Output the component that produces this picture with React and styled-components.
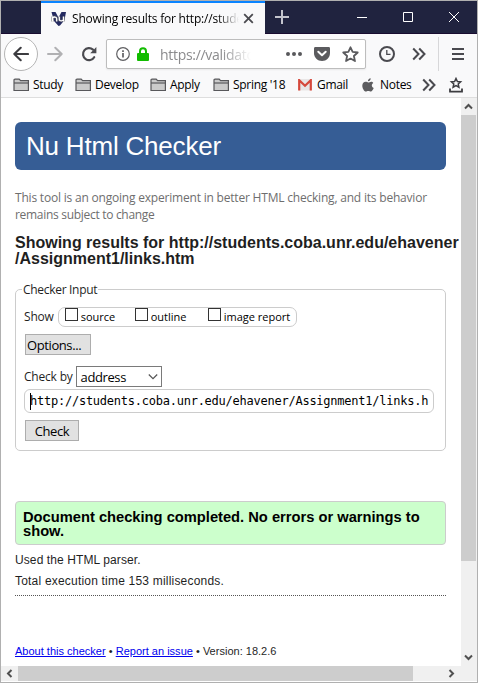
import React from 'react';
import styled, { createGlobalStyle, css } from 'styled-components';

const Global = createGlobalStyle`
  * { box-sizing: border-box; }
  body { margin: 0; overflow: hidden; }
`;

const ui = `'Open Sans', 'Noto Sans', sans-serif`;
const arial = `'Liberation Sans', Arial, sans-serif`;

const Window = styled.div`
  width: 478px;
  height: 683px;
  border: 1px solid #b0b0b0;
  background: #fff;
  display: flex;
  flex-direction: column;
  font-family: ${ui};
  overflow: hidden;
`;

const Label = styled.span`
  white-space: nowrap;
  font-size: ${p => p.$size || 12}px;
  letter-spacing: ${p => p.$track || 0}px;
  color: ${p => p.$color || '#000'};
`;

/* title bar */
const TitleBar = styled.header`
  height: 33px;
  flex: none;
  display: flex;
  background: #20233f;
  border-bottom: 1px solid #190c30;
`;
const Tab = styled.div`
  width: 224px;
  height: 33px;
  margin-left: 40px;
  padding: 0 11px 0 9px;
  border-top: 2px solid #0a84ff;
  background: #f9f9fa;
  display: flex;
  align-items: center;
`;
const TabTitle = styled.div`
  width: 167px;
  margin: 0 4px 0 5px;
  line-height: 20px;
  overflow: hidden;
  display: flex;
  mask-image: linear-gradient(to right, #000 145px, transparent 167px);
`;
const Controls = styled.div`
  flex: 1;
  display: grid;
  grid-template-columns: 34px 40px 46px 46px 45px;
  align-items: center;
  justify-items: center;
`;

/* navigation */
const NavBar = styled.nav`
  height: 40px;
  flex: none;
  background: #f9f9fa;
  display: flex;
  align-items: center;
`;
const BackButton = styled.div`
  width: 34px;
  height: 34px;
  margin-left: 3px;
  border: 1px solid #b5b5b5;
  border-radius: 50%;
  background: #fff;
  display: grid;
  place-items: center;
`;
const NavIcon = styled.div`
  width: ${p => p.$w}px;
  flex: none;
  display: grid;
  place-items: center;
`;
const UrlBar = styled.div`
  width: 260px;
  height: 30px;
  border: 1px solid #bdbdbd;
  border-radius: 2px;
  box-shadow: 0 1px 2px rgba(0, 0, 0, 0.07);
  background: #fff;
  display: flex;
  align-items: center;
  padding-left: 9px;
`;
const Url = styled.div`
  width: 120px;
  margin: 2px 0 0 4px;
  overflow: hidden;
  line-height: 20px;
  display: flex;
  mask-image: linear-gradient(to right, #000 62px, transparent 91px);
`;
const Divider = styled.div`
  width: 1px;
  height: 34px;
  background: #d7d7d9;
`;

const Bookmarks = styled.div`
  height: 24px;
  flex: none;
  background: #f9f9fa;
  border-bottom: 1px solid #dedede;
  display: grid;
  grid-template-columns: 62px 75px 63px 85px 64px 60px 27px 20px;
  padding-left: 12px;
`;
const Bookmark = styled.div`
  height: 22px;
  display: flex;
  align-items: center;
  gap: ${p => p.$gap || 3}px;
  line-height: 20px;
`;

/* viewport */
const Viewport = styled.div`
  flex: 1;
  min-height: 0;
  display: grid;
  grid-template: 568px 15px / 460px 16px;
`;
const Page = styled.main`
  overflow: hidden;
  background: #fff;
  padding: 24px 0 0 14px;
  color: #1f1f1f;
`;
const Banner = styled.h1`
  width: 431px;
  height: 48px;
  margin: 0;
  padding-left: 11px;
  border-radius: 6px;
  background: #365d95;
  font: 400 26px/49px ${arial};
`;
const Intro = styled.p`
  margin: 19px 0 0;
  font-size: 12px;
  line-height: 17px;
`;
const Heading = styled.h2`
  margin: 12px 0 0;
  font: 700 16px/16px ${arial};
  white-space: nowrap;
`;
const Form = styled.form`
  width: 431px;
  height: 170px;
  margin-top: 14px;
  display: flex;
  flex-direction: column;
`;
const Fieldset = styled.fieldset`
  height: 170px;
  margin: 0;
  padding: 0 8px;
  border: 1px solid #ccc;
  border-radius: 5px;
`;
const Legend = styled.legend`
  height: 17px;
  margin-left: -2px;
  padding: 0 1px;
  line-height: 17px;
  display: flex;
`;
const Row = styled.div`
  height: ${p => p.$h}px;
  margin-top: ${p => p.$mt || 0}px;
  display: flex;
  align-items: center;
  line-height: 18px;
`;
const Options = styled.div`
  width: 239px;
  height: 20px;
  margin-left: 4px;
  border: 1px solid #ccc;
  border-radius: 7px;
  display: grid;
  grid-template-columns: 70px 73px 90px;
  padding-left: 6px;
`;
const Option = styled.label`
  display: flex;
  gap: 3px;
`;
const Box = styled.span`
  width: 13px;
  height: 13px;
  flex: none;
  border: 1px solid #333;
  background: #fff;
`;
const Button = styled.button`
  width: ${p => p.$w}px;
  height: 21px;
  margin: 0 0 0 1px;
  padding: 0;
  border: 1px solid #adadad;
  background: #e1e1e1;
  font-family: ${ui};
  line-height: 18px;
  ${p => p.$left && css`text-align: left; padding-left: 1px;`}
`;
const Select = styled.div`
  width: 86px;
  height: 21px;
  margin-left: 3px;
  padding: 0 3px 0 4px;
  border: 1px solid #7a7a7a;
  display: flex;
  align-items: center;
  justify-content: space-between;
`;
const Address = styled.div`
  width: 410px;
  height: 24px;
  margin-top: 2px;
  padding-left: 5px;
  border: 1px solid #ccc;
  border-radius: 6px;
  display: flex;
  align-items: center;
  font-family: 'DejaVu Sans Mono', monospace;
  line-height: 20px;
`;
const Caret = styled.i`
  width: 1px;
  height: 17px;
  background: #000;
  margin-right: -1px;
`;
const Success = styled.div`
  width: 431px;
  height: 44px;
  margin-top: 50px;
  padding: 8px 0 0 7px;
  border: 1px solid #ccc;
  border-radius: 4px;
  background: #cfc;
  color: #000;
  font: 700 14.7px/14px ${arial};
`;
const Stats = styled.div`
  width: 431px;
  height: 51px;
  padding-top: 5px;
  border-bottom: 1px dotted #555;
  font: 12px/21px ${arial};
`;
const Footer = styled.footer`
  margin-top: 46px;
  font: 11px/18px ${arial};
  letter-spacing: 0.01px;
  white-space: nowrap;
`;
const Link = styled.a`
  color: #00e;
  text-decoration: underline;
`;

/* scrollbars */
const VScroll = styled.div`
  background: #f0f0f0;
  display: grid;
  grid-template-rows: 17px 446px 88px 17px;
  padding-right: 1px;
  justify-items: center;
  align-items: center;
`;
const HScroll = styled.div`
  grid-column: 1 / 3;
  background: #f0f0f0;
  display: grid;
  grid-template-columns: 17px 395px 30px 17px;
  align-items: center;
  justify-items: center;
`;
const Thumb = styled.div`
  width: 100%;
  height: 100%;
  background: #cdcdcd;
`;

const Svg = ({ w = 16, h = w, box, s = '#4a4a4f', sw = 2, children }) => (
  <svg width={w} height={h} viewBox={box || `0 0 ${w} ${h}`} fill="none" stroke={s} strokeWidth={sw}>
    {children}
  </svg>
);

const Folder = () => (
  <Svg w={17} h={14} s="#58585b" sw={1.2}>
    <path d="M1 12.5V2.2C1 1.5 1.3 1.1 2 1.1h4.2l1.4 1.6H15.4V12.5Z" fill="#cbcbcb" />
    <path d="M1 5h14.4" />
  </Svg>
);
const Back = () => (
  <Svg s="#3c3c40" sw={2.1}><path d="M1.3 8H15M7.7 1.8 1.3 8l6.4 6.2" strokeLinecap="round" strokeLinejoin="round" /></Svg>
);
const Forward = () => (
  <Svg s="#b1b1b3"><path d="M1 8h13.7M8.3 1.8 14.7 8l-6.4 6.2" strokeLinecap="round" strokeLinejoin="round" /></Svg>
);
const Reload = () => (
  <Svg sw={2.2}>
    <path d="M13.2 11.2A6 6 0 1 1 12 3.6" strokeLinecap="round" />
    <path d="M15.4 1v6.2H9.2Z" fill="#4a4a4f" stroke="none" />
  </Svg>
);
const Chevrons = () => (
  <Svg w={14} h={14}><path d="m1.2 1.5 5.3 5.5-5.3 5.5M7.2 1.5l5.3 5.5-5.3 5.5" /></Svg>
);
const starPath = 'm8 1.2 2 4.4 4.8.5-3.6 3.3 1 4.8L8 11.800 3.800 14.200l1-4.800L1.200 6.100l4.800-.500Z';
const Tiny = ({ d }) => <Svg w={9} h={9} s="#505050"><path d={d} /></Svg>;

const Favicon = () => (
  <svg width="17" height="16" viewBox="0 0 17 16">
    <path d="M1.500 1h4l3 5.500 3-5.500h4.500l-1.500 8-4.500 5.500-1.500.500L4 10Z" fill="#252b61" />
    <path d="M2.500 10.500V5.500M2.500 7c1.500-1.600 4.200-1.200 4.200.8v2.700M9.300 5.500v3c0 1.900 4.200 1.700 4.200-.300M13.500 5.500v5" fill="none" stroke="#666" strokeWidth="3" opacity=".55" />
    <path d="M2.500 10.500V5.500M2.500 7c1.500-1.600 4.200-1.200 4.200.8v2.700M9.300 5.500v3c0 1.900 4.200 1.700 4.200-.300M13.500 5.500v5" fill="none" stroke="#fff" strokeWidth="1.300" />
  </svg>
);
const Gmail = () => (
  <svg width="14" height="12" viewBox="0 0 14 12">
    <path d="M1 0h12v11.5H1Z" fill="#e8e6e6" />
    <path d="M1.200 11.500V1.200L7 6.800l5.800-5.600v10.300" fill="none" stroke="#d5483b" strokeWidth="2.200" />
  </svg>
);
const Apple = () => (
  <svg width="12" height="14" viewBox="0 0 12 14" fill="#5c5c5f">
    <path d="M8.700.3C8.800 2 7.400 3.300 5.900 3.300 5.800 1.800 7.200.5 8.700.3ZM11.300 5C9.200 6.200 9.400 9.100 11.700 10c-.6 1.600-1.700 3.500-2.900 3.500-1 0-1.300-.6-2.500-.6s-1.600.6-2.500.6C2.200 13.500.3 10.300.3 7.700c0-2.600 1.600-3.900 3.300-3.900 1.100 0 2 .7 2.700.7S8 3.700 9.200 3.700c.9 0 1.700.5 2.100 1.300Z" />
  </svg>
);

const folders = ['Study', 'Develop', 'Apply', "Spring '18"];
const ink = '#1f1f1f';

export default function App() {
  return (
    <Window>
      <Global />
      <TitleBar>
        <Tab>
          <Favicon />
          <TabTitle><Label $track={-0.2}>Showing results for http://students</Label></TabTitle>
          <Svg w={11} sw={1.8}><path d="m1.2 1.2 8.6 8.6m0-8.6L1.2 9.8" /></Svg>
        </Tab>
        <Controls>
          <Svg w={14} s="#c3c4cd"><path d="M7 0v14M0 7h14" /></Svg>
          <span />
          <Svg w={10} s="#fff" sw={1}><path d="M0 5.5h10" /></Svg>
          <Svg w={10} s="#fff" sw={1}><path d="M.5.5h9v9h-9Z" /></Svg>
          <Svg w={10} s="#fff" sw={1}><path d="m0 0 10 10M10 0 0 10" /></Svg>
        </Controls>
      </TitleBar>
      <NavBar>
        <BackButton><Back /></BackButton>
        <NavIcon $w={33}><Forward /></NavIcon>
        <NavIcon $w={35}><Reload /></NavIcon>
        <UrlBar>
          <Svg w={14} s="#5f5f62" sw={1.2}>
            <circle cx="7" cy="7" r="6.3" />
            <path d="M7 6v4.500M7 3.200v1.700" strokeWidth="1.7" />
          </Svg>
          <NavIcon $w={26}>
            <Svg w={12} h={14} s="#12bc00">
              <path d="M3 7V4.200a3 3 0 0 1 6 0V7" />
              <rect x="0" y="6" width="12" height="8" rx="1" fill="#12bc00" stroke="none" />
            </Svg>
          </NavIcon>
          <Url><Label $size={14} $track={-0.3} $color="#8b8b8d">https://validator</Label></Url>
          <NavIcon $w={28}>
            <Svg w={16} h={4}><path d="M0 2a2 2 0 1 0 4 0 2 2 0 1 0-4 0M6 2a2 2 0 1 0 4 0 2 2 0 1 0-4 0M12 2a2 2 0 1 0 4 0 2 2 0 1 0-4 0" fill="#58585b" stroke="none" /></Svg>
          </NavIcon>
          <NavIcon $w={28}>
            <Svg w={16} h={14}>
              <path d="M1.500 0h13C15.500 0 16 .5 16 1.500V6c0 4.500-3.600 8-8 8S0 10.500 0 6V1.500C0 .5.5 0 1.500 0Z" fill="#5b5b5e" stroke="none" />
              <path d="m4.300 4.700 3.700 3.500 3.700-3.500" stroke="#fff" strokeLinecap="round" strokeLinejoin="round" />
            </Svg>
          </NavIcon>
          <NavIcon $w={28}><Svg w={17} box="0 0 16 16" s="#5b5b5e" sw={1.7}><path d={starPath} strokeLinejoin="round" /></Svg></NavIcon>
        </UrlBar>
        <NavIcon $w={41}>
          <Svg w={16}><circle cx="8" cy="8" r="7" /><path d="M7.800 4v4.300h3.700" strokeWidth="1.3" /></Svg>
        </NavIcon>
        <NavIcon $w={24}><Chevrons /></NavIcon>
        <NavIcon $w={7} />
        <Divider />
        <NavIcon $w={38}><Svg w={12} h={12}><path d="M0 1h12M0 6h12M0 11h12" /></Svg></NavIcon>
      </NavBar>
      <Bookmarks>
        {folders.map(name => (
          <Bookmark key={name}><Folder /><Label $track={-0.3}>{name}</Label></Bookmark>
        ))}
        <Bookmark $gap={5}><Gmail /><Label $track={-0.3}>Gmail</Label></Bookmark>
        <Bookmark $gap={6}><Apple /><Label $track={-0.3}>Notes</Label></Bookmark>
        <Bookmark><Chevrons /></Bookmark>
        <Bookmark>
          <Svg w={14} h={16} s="#3c3c40" sw={1.5}>
            <path d="m7 1.500 1.400 3 3.200.3-2.400 2.200.7 3.200L7 8.600l-2.900 1.600.7-3.200-2.400-2.200 3.200-.3Z" />
            <path d="M1 11.500V14.700H13V11.500" strokeWidth="1.8" />
          </Svg>
        </Bookmark>
      </Bookmarks>
      <Viewport>
        <Page>
          <Banner><Label $size={26} $track={-0.2} $color="#fff">Nu Html Checker</Label></Banner>
          <Intro>
            <Label $track={-0.2} $color="#6e6e6e">This tool is an ongoing experiment in better HTML checking, and its behavior</Label>
            <br />
            <Label $track={-0.3} $color="#6e6e6e">remains subject to change</Label>
          </Intro>
          <Heading>Showing results for http://students.coba.unr.edu/ehavener<br />/Assignment1/links.htm</Heading>
          <Form>
            <Fieldset>
              <Legend><Label $track={-0.3} $color={ink}>Checker Input</Label></Legend>
              <Row $h={20} $mt={9}>
                <Label $track={-0.2} $color={ink}>Show</Label>
                <Options>
                  {['source', 'outline', 'image report'].map(name => (
                    <Option key={name}><Box /><Label $size={11}>{name}</Label></Option>
                  ))}
                </Options>
              </Row>
              <Row $h={21} $mt={7}>
                <Button type="button" $w={66} $left><Label $size={13} $track={-0.4}>Options...</Label></Button>
              </Row>
              <Row $h={21} $mt={11}>
                <Label $track={-0.2} $color={ink}>Check by</Label>
                <Select><Label $size={13} $track={-0.4}>address</Label><Svg w={10} h={6} s="#555" sw={1.2}><path d="m.8.5 4.200 4.200L9.200.5" /></Svg></Select>
              </Row>
              <Address><Caret /><Label $track={-0.24}>http://students.coba.unr.edu/ehavener/Assignment1/links.h</Label></Address>
              <Row $h={21} $mt={7}>
                <Button type="button" $w={54}><Label $size={13} $track={-0.4}>Check</Label></Button>
              </Row>
            </Fieldset>
          </Form>
          <Success>Document checking completed. No errors or warnings to<br />show.</Success>
          <Stats>
            <Label $track={0.1} $color={ink}>Used the HTML parser.</Label><br />
            <Label $track={0.2} $color={ink}>Total execution time 153 milliseconds.</Label>
          </Stats>
          <Footer><Link>About this checker</Link> • <Link>Report an issue</Link> • Version: 18.2.6</Footer>
        </Page>
        <VScroll>
          <Tiny d="m1 6.500 3.500-3.500L8 6.500" />
          <Thumb />
          <span />
          <Tiny d="m1 2.500 3.500 3.500L8 2.500" />
        </VScroll>
        <HScroll>
          <Tiny d="M6.500 1 3 4.500l3.500 3.500" />
          <Thumb />
          <span />
          <Tiny d="m2.500 1 3.500 3.500L2.500 8" />
        </HScroll>
      </Viewport>
    </Window>
  );
}
